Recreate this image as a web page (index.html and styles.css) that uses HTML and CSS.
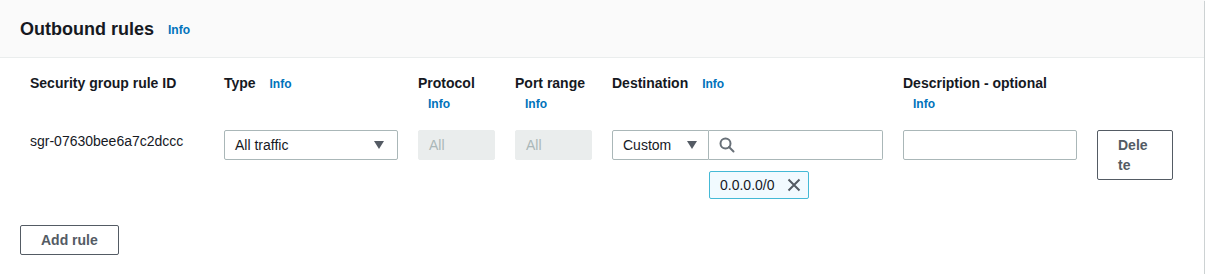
FILE: index.html
```html
<!DOCTYPE html>
<html lang="en">
<head>
    <meta charset="UTF-8">
    <title>Outbound rules</title>
    <link rel="stylesheet" href="styles.css">
</head>
<body>
    <div class="card">
        <div class="card-header">
            <h2>Outbound rules</h2>
            <a class="info" href="#">Info</a>
        </div>
        <div class="card-body">
            <div class="rules">
                <div class="col-label">Security group rule ID</div>
                <div class="col-label">Type <a class="info" href="#">Info</a></div>
                <div class="col-label">Protocol <a class="info" href="#">Info</a></div>
                <div class="col-label">Port range <a class="info" href="#">Info</a></div>
                <div class="col-label">Destination <a class="info" href="#">Info</a></div>
                <div class="col-label">Description - optional <a class="info" href="#">Info</a></div>
                <div></div>

                <div class="rule-id">sgr-07630bee6a7c2dccc</div>
                <div class="select">
                    <span>All traffic</span>
                    <span class="caret"></span>
                </div>
                <div class="input disabled">All</div>
                <div class="input disabled">All</div>
                <div class="destination">
                    <div class="dest-group">
                        <div class="select dest-select">
                            <span>Custom</span>
                            <span class="caret"></span>
                        </div>
                        <div class="input search">
                            <svg width="16" height="16" viewBox="0 0 16 16">
                                <circle cx="6.5" cy="6.5" r="5" fill="none" stroke="#687078" stroke-width="2"/>
                                <path d="M10 10 L14.5 14.5" stroke="#687078" stroke-width="2" stroke-linecap="round"/>
                            </svg>
                        </div>
                    </div>
                    <div class="token">
                        <span>0.0.0.0/0</span>
                        <svg width="14" height="14" viewBox="0 0 14 14">
                            <path d="M1.5 1.5 L12.5 12.5 M12.5 1.5 L1.5 12.5" stroke="#545b64" stroke-width="2"/>
                        </svg>
                    </div>
                </div>
                <div class="input"></div>
                <div><button class="btn delete">Delete</button></div>
            </div>
            <button class="btn">Add rule</button>
        </div>
    </div>
</body>
</html>
```

FILE: styles.css
```css
body {
    margin: 0;
    font-family: "Liberation Sans", Arial, sans-serif;
    font-size: 14px;
    line-height: 20px;
    color: #16191f;
    background: #fff;
}

.card {
    width: 1204px;
    background: #fff;
    box-shadow: 0 1px 1px 0 rgba(0,28,36,0.3), 1px 1px 1px 0 rgba(0,28,36,0.15);
}

.card-header {
    display: flex;
    align-items: center;
    padding: 18px 20px 17px;
    background: #fafafa;
    border-bottom: 1px solid #eaeded;
}

.card-header h2 {
    margin: 0;
    font-size: 18px;
    line-height: 22px;
    font-weight: 700;
}

.card-header .info {
    margin-left: 14px;
    padding-top: 2px;
}

.info {
    display: inline-block;
    margin-left: 10px;
    font-size: 12px;
    font-weight: 700;
    color: #0073bb;
    text-decoration: none;
}

.card-body {
    padding: 15px 20px 19px;
}

.rules {
    display: grid;
    grid-template-columns: 174px 174px 77px 77px 271px 174px 76px;
    column-gap: 20px;
    row-gap: 16px;
    margin-left: 10px;
    margin-bottom: 26px;
    align-items: start;
}

.col-label {
    font-weight: 700;
}

.rule-id {
    padding-top: 1px;
}

.select,
.input {
    box-sizing: border-box;
    height: 30px;
    border: 1px solid #aab7b8;
    border-radius: 2px;
    padding: 4px 10px;
    background: #fff;
}

.select {
    display: flex;
    align-items: center;
    justify-content: space-between;
    padding-right: 13px;
}

.caret {
    width: 0;
    height: 0;
    border-left: 5.5px solid transparent;
    border-right: 5.5px solid transparent;
    border-top: 8px solid #545b64;
}

.disabled {
    background: #eaeded;
    border-color: #eaeded;
    color: #aab7b8;
}

.dest-group {
    display: flex;
}

.dest-select {
    width: 97px;
    flex: none;
    border-radius: 2px 0 0 2px;
    padding-right: 11px;
}

.search {
    flex: 1;
    display: flex;
    align-items: center;
    border-left: none;
    border-radius: 0 2px 2px 0;
}

.token {
    display: inline-flex;
    align-items: center;
    gap: 12px;
    margin: 11px 0 0 97px;
    height: 28px;
    box-sizing: border-box;
    padding: 0 7px 0 10px;
    background: #f1faff;
    border: 1px solid #44b9d6;
    border-radius: 2px;
}

.btn {
    font-family: inherit;
    font-size: 14px;
    line-height: 20px;
    font-weight: 700;
    color: #545b64;
    background: #fff;
    border: 1px solid #545b64;
    border-radius: 2px;
    padding: 4px 20px;
}

.delete {
    width: 76px;
    text-align: left;
    word-break: break-all;
}
```
